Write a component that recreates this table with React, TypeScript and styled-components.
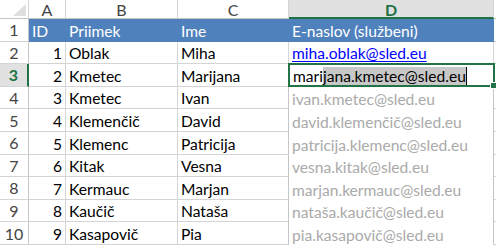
import styled, { createGlobalStyle } from "styled-components"

const GlobalStyle = createGlobalStyle`
  html, body {
    margin: 0;
    background: #ffffff;
    overflow: hidden;
  }
`

const Sheet = styled.div`
  display: grid;
  grid-template-columns: 29px 37px 112px 111px 205px 1fr;
  grid-template-rows: 19px repeat(10, 22.6px);
  width: 496px;
  height: 248px;
  font-family: Lato, "Open Sans", sans-serif;
  font-size: 15.6px;
  color: #000000;
`

const Corner = styled.div`
  box-sizing: border-box;
  border-right: 1px solid #d4d4d4;
  border-bottom: 1px solid #c6c6c6;
  display: flex;
  align-items: flex-end;
  justify-content: flex-end;
  padding: 0 2px 2px 0;
`

const ColHead = styled.div<{ $active?: boolean }>`
  box-sizing: border-box;
  display: flex;
  align-items: center;
  justify-content: center;
  border-right: 1px solid #d4d4d4;
  border-bottom: ${(p) => (p.$active ? "2px solid #217346" : "1px solid #c6c6c6")};
  background: ${(p) => (p.$active ? "#e1e1e1" : "#ffffff")};
  color: ${(p) => (p.$active ? "#217346" : "#444444")};
  font-weight: ${(p) => (p.$active ? 700 : 400)};
  font-size: 16px;
  padding-top: 1px;
`

const RowHead = styled.div<{ $active?: boolean }>`
  box-sizing: border-box;
  display: flex;
  align-items: center;
  justify-content: center;
  border-right: ${(p) => (p.$active ? "2px solid #217346" : "1px solid #c6c6c6")};
  border-bottom: 1px solid #d4d4d4;
  background: ${(p) => (p.$active ? "#e1e1e1" : "#ffffff")};
  color: ${(p) => (p.$active ? "#217346" : "#444444")};
  font-weight: ${(p) => (p.$active ? 700 : 400)};
  font-size: 16px;
`

const Cell = styled.div<{ $head?: boolean; $right?: boolean }>`
  box-sizing: border-box;
  display: flex;
  align-items: flex-end;
  justify-content: ${(p) => (p.$right ? "flex-end" : "flex-start")};
  padding: 0 3px 1px 3px;
  white-space: nowrap;
  overflow: hidden;
  background: ${(p) => (p.$head ? "#4f81bd" : "#ffffff")};
  color: ${(p) => (p.$head ? "#ffffff" : "#000000")};
  border-right: 1px solid ${(p) => (p.$head ? "#4f81bd" : "#d4d4d4")};
  border-bottom: 1px solid ${(p) => (p.$head ? "#4f81bd" : "#d4d4d4")};
`

const Blank = styled.div`
  box-sizing: border-box;
  border-bottom: 1px solid #d4d4d4;
`

const BlankHead = styled.div`
  box-sizing: border-box;
  border-bottom: 1px solid #c6c6c6;
`

const Link = styled.span`
  color: #0000ff;
  text-decoration: underline;
  text-underline-offset: 2px;
`

const ActiveCell = styled.div`
  position: relative;
  box-sizing: border-box;
  display: flex;
  align-items: flex-end;
  padding: 0 2px 0 3px;
  margin: -1px -1px 0 -1px;
  border: 2px solid #217346;
  white-space: nowrap;
`

const Picked = styled.span`
  background: #c8c8c8;
  border-right: 1px solid #000000;
`

const FillHandle = styled.div`
  position: absolute;
  right: -4px;
  bottom: -4px;
  width: 5px;
  height: 5px;
  background: #217346;
  border: 1px solid #ffffff;
`

const Preview = styled.div`
  box-sizing: border-box;
  display: flex;
  align-items: flex-end;
  padding: 0 3px 1px 3px;
  margin-left: -1px;
  border-left: 1px solid #c6c6c6;
  border-right: 1px solid #c6c6c6;
  color: #aaaaaa;
  white-space: nowrap;
  background: #ffffff;
`

type Person = { id: number; last: string; first: string; mail: string }

const people: Person[] = [
  { id: 1, last: "Oblak", first: "Miha", mail: "miha.oblak@sled.eu" },
  { id: 2, last: "Kmetec", first: "Marijana", mail: "marijana.kmetec@sled.eu" },
  { id: 3, last: "Kmetec", first: "Ivan", mail: "ivan.kmetec@sled.eu" },
  { id: 4, last: "Klemenčič", first: "David", mail: "david.klemenčič@sled.eu" },
  { id: 5, last: "Klemenc", first: "Patricija", mail: "patricija.klemenc@sled.eu" },
  { id: 6, last: "Kitak", first: "Vesna", mail: "vesna.kitak@sled.eu" },
  { id: 7, last: "Kermauc", first: "Marjan", mail: "marjan.kermauc@sled.eu" },
  { id: 8, last: "Kaučič", first: "Nataša", mail: "nataša.kaučič@sled.eu" },
  { id: 9, last: "Kasapovič", first: "Pia", mail: "pia.kasapovič@sled.eu" },
]

const CornerMark = () => (
  <svg width="13" height="12" viewBox="0 0 13 12">
    <polygon points="13,0 13,12 0,12" fill="#dfdfdf" />
  </svg>
)

const App = () => {
  return (
    <>
      <GlobalStyle />
      <Sheet>
        <Corner>
          <CornerMark />
        </Corner>
        <ColHead>A</ColHead>
        <ColHead>B</ColHead>
        <ColHead>C</ColHead>
        <ColHead $active>D</ColHead>
        <BlankHead />

        <RowHead>1</RowHead>
        <Cell $head>ID</Cell>
        <Cell $head>Priimek</Cell>
        <Cell $head>Ime</Cell>
        <Cell $head>E-naslov (službeni)</Cell>
        <Blank />

        {people.map((p, i) => {
          const row = i + 2
          return [
            <RowHead key={`h${row}`} $active={row === 3}>
              {row}
            </RowHead>,
            <Cell key={`a${row}`} $right>
              {p.id}
            </Cell>,
            <Cell key={`b${row}`}>{p.last}</Cell>,
            <Cell key={`c${row}`}>{p.first}</Cell>,
            row === 2 ? (
              <Cell key={`d${row}`}>
                <Link>{p.mail}</Link>
              </Cell>
            ) : row === 3 ? (
              <ActiveCell key={`d${row}`}>
                mari<Picked>jana.kmetec@sled.eu</Picked>
                <FillHandle />
              </ActiveCell>
            ) : (
              <Preview key={`d${row}`}>{p.mail}</Preview>
            ),
            <Blank key={`e${row}`} />,
          ]
        })}
      </Sheet>
    </>
  )
}

export default App
